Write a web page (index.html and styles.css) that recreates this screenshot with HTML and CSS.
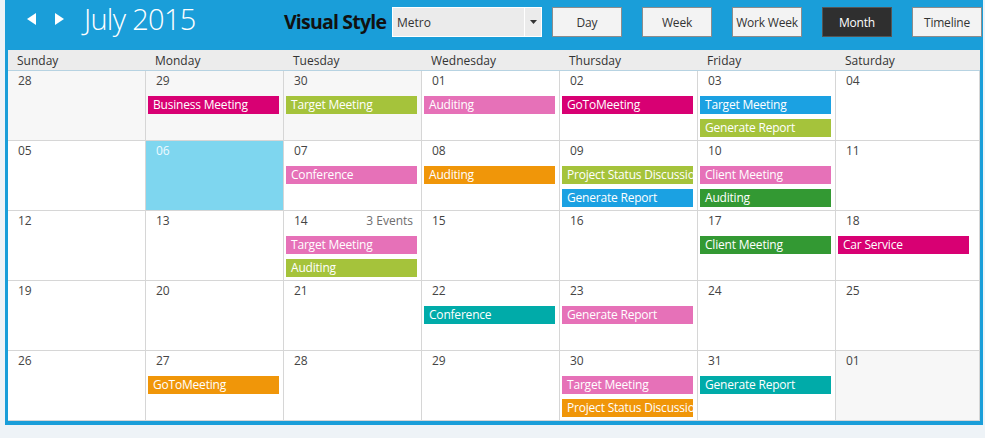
FILE: index.html
```html
<!DOCTYPE html>
<html>
<head>
<meta charset="utf-8">
<link rel="stylesheet" href="styles.css">
</head>
<body>
<div class="scheduler">
  <div class="toolbar">
    <div class="nav">
      <svg class="arrow" width="9" height="12" viewBox="0 0 9 12"><polygon points="9,0 9,12 0,6" fill="#fff"/></svg>
      <svg class="arrow next" width="9" height="12" viewBox="0 0 9 12"><polygon points="0,0 9,6 0,12" fill="#fff"/></svg>
    </div>
    <div class="title">July 2015</div>
    <div class="vs-label">Visual Style</div>
    <div class="select">
      <span class="select-text">Metro</span>
      <span class="select-btn"><svg width="7" height="4" viewBox="0 0 7 4"><polygon points="0,0 7,0 3.5,4" fill="#333"/></svg></span>
    </div>
    <div class="views">
      <div class="vbtn">Day</div>
      <div class="vbtn">Week</div>
      <div class="vbtn">Work Week</div>
      <div class="vbtn active">Month</div>
      <div class="vbtn">Timeline</div>
    </div>
  </div>
  <div class="days-head">
    <div class="dh">Sunday</div><div class="dh">Monday</div><div class="dh">Tuesday</div><div class="dh">Wednesday</div><div class="dh">Thursday</div><div class="dh">Friday</div><div class="dh">Saturday</div>
  </div>
  <div class="month">
    <div class="cell other"><div class="num">28</div></div>
    <div class="cell other"><div class="num">29</div><div class="ev magenta">Business Meeting</div></div>
    <div class="cell other"><div class="num">30</div><div class="ev lime">Target Meeting</div></div>
    <div class="cell"><div class="num">01</div><div class="ev pink">Auditing</div></div>
    <div class="cell"><div class="num">02</div><div class="ev magenta">GoToMeeting</div></div>
    <div class="cell"><div class="num">03</div><div class="ev blue">Target Meeting</div><div class="ev lime">Generate Report</div></div>
    <div class="cell"><div class="num">04</div></div>

    <div class="cell"><div class="num">05</div></div>
    <div class="cell today"><div class="num">06</div></div>
    <div class="cell"><div class="num">07</div><div class="ev pink">Conference</div></div>
    <div class="cell"><div class="num">08</div><div class="ev orange">Auditing</div></div>
    <div class="cell"><div class="num">09</div><div class="ev lime">Project Status Discussion</div><div class="ev blue">Generate Report</div></div>
    <div class="cell"><div class="num">10</div><div class="ev pink">Client Meeting</div><div class="ev green">Auditing</div></div>
    <div class="cell"><div class="num">11</div></div>

    <div class="cell"><div class="num">12</div></div>
    <div class="cell"><div class="num">13</div></div>
    <div class="cell"><div class="num">14<span class="more">3 Events</span></div><div class="ev pink">Target Meeting</div><div class="ev lime">Auditing</div></div>
    <div class="cell"><div class="num">15</div></div>
    <div class="cell"><div class="num">16</div></div>
    <div class="cell"><div class="num">17</div><div class="ev green">Client Meeting</div></div>
    <div class="cell"><div class="num">18</div><div class="ev magenta">Car Service</div></div>

    <div class="cell"><div class="num">19</div></div>
    <div class="cell"><div class="num">20</div></div>
    <div class="cell"><div class="num">21</div></div>
    <div class="cell"><div class="num">22</div><div class="ev teal">Conference</div></div>
    <div class="cell"><div class="num">23</div><div class="ev pink">Generate Report</div></div>
    <div class="cell"><div class="num">24</div></div>
    <div class="cell"><div class="num">25</div></div>

    <div class="cell"><div class="num">26</div></div>
    <div class="cell"><div class="num">27</div><div class="ev orange">GoToMeeting</div></div>
    <div class="cell"><div class="num">28</div></div>
    <div class="cell"><div class="num">29</div></div>
    <div class="cell"><div class="num">30</div><div class="ev pink">Target Meeting</div><div class="ev orange">Project Status Discussion</div></div>
    <div class="cell"><div class="num">31</div><div class="ev teal">Generate Report</div></div>
    <div class="cell other"><div class="num">01</div></div>
  </div>
</div>
</body>
</html>
```
FILE: styles.css
```css
* { box-sizing: border-box; }
html, body { margin: 0; padding: 0; }
body {
  background: #eef3f7;
  font-family: "Open Sans", "Noto Sans", sans-serif;
  width: 985px;
  height: 438px;
  overflow: hidden;
}
.scheduler {
  margin-left: 5px;
  width: 978px;
  background: #1a9ed9;
  padding: 0 3px 4px 3px;
}
.toolbar {
  height: 50px;
  display: flex;
  align-items: flex-start;
  overflow: visible;
}
.toolbar > * { flex: none; }
.nav {
  width: 57px;
  margin-left: 19px;
  padding-top: 13px;
  display: flex;
}
.arrow { display: block; }
.arrow.next { margin-left: 19px; }
.title {
  width: 200px;
  margin-top: 1px;
  font-size: 29px;
  font-weight: 300;
  line-height: 36px;
  color: #fff;
  letter-spacing: -0.7px;
  white-space: nowrap;
}
.vs-label {
  width: 108px;
  margin-top: 10px;
  font-size: 19.5px;
  font-weight: 700;
  line-height: 24px;
  color: #111;
  white-space: nowrap;
  letter-spacing: -0.8px;
}
.select {
  margin-top: 7px;
  width: 150px;
  height: 30px;
  background: #ebebeb;
  border: 1px solid #fff;
  display: flex;
  align-items: center;
}
.select-text {
  flex: 1;
  padding-left: 4px;
  font-size: 12px;
  color: #333;
}
.select-btn {
  width: 17px;
  height: 28px;
  border-left: 1px solid #fff;
  display: flex;
  align-items: center;
  justify-content: center;
}
.select-btn svg { display: block; }
.views {
  margin-left: 10px;
  margin-top: 7px;
  display: flex;
  gap: 20px;
}
.vbtn {
  flex: none;
  width: 70px;
  height: 30px;
  background: #f3f3f3;
  border: 1px solid #8c8c8c;
  font-size: 12px;
  color: #333;
  display: flex;
  align-items: center;
  justify-content: center;
  white-space: nowrap;
  letter-spacing: -0.2px;
}
.vbtn.active {
  background: #2f2f2f;
  border-color: #555;
  color: #fff;
}
.days-head {
  display: grid;
  grid-template-columns: repeat(6, 138px) 1fr;
  height: 21px;
  background: #ececec;
  border-bottom: 1px solid #b7d3e2;
}
.dh {
  font-size: 12px;
  line-height: 21px;
  color: #333;
  padding-left: 9px;
}
.month {
  display: grid;
  grid-template-columns: repeat(6, 138px) 1fr;
  grid-auto-rows: 70px;
  background: #fff;
}
.cell {
  border-right: 1px solid #d6d6d6;
  border-bottom: 1px solid #d6d6d6;
  overflow: hidden;
  background: #fff;
}
.cell.other { background: #f7f7f7; }
.cell.today { background: #7ed6ef; }
.cell.today .num { color: #eefaff; }
.num {
  display: flex;
  justify-content: space-between;
  height: 16px;
  margin-top: 2px;
  padding: 0 8px 0 10px;
  font-size: 12px;
  line-height: 16px;
  color: #444;
  margin-bottom: 7px;
}
.more { color: #6e6e6e; }
.ev {
  width: 131px;
  height: 18px;
  margin: 0 0 5px 2px;
  padding-left: 5px;
  font-size: 12px;
  line-height: 18px;
  color: #fff;
  white-space: nowrap;
  overflow: hidden;
  letter-spacing: -0.2px;
}
.magenta { background: #d80073; }
.lime { background: #a5c33b; }
.pink { background: #e671b8; }
.blue { background: #1ba1e2; }
.orange { background: #f09609; }
.green { background: #339933; }
.teal { background: #00aba9; }
```
